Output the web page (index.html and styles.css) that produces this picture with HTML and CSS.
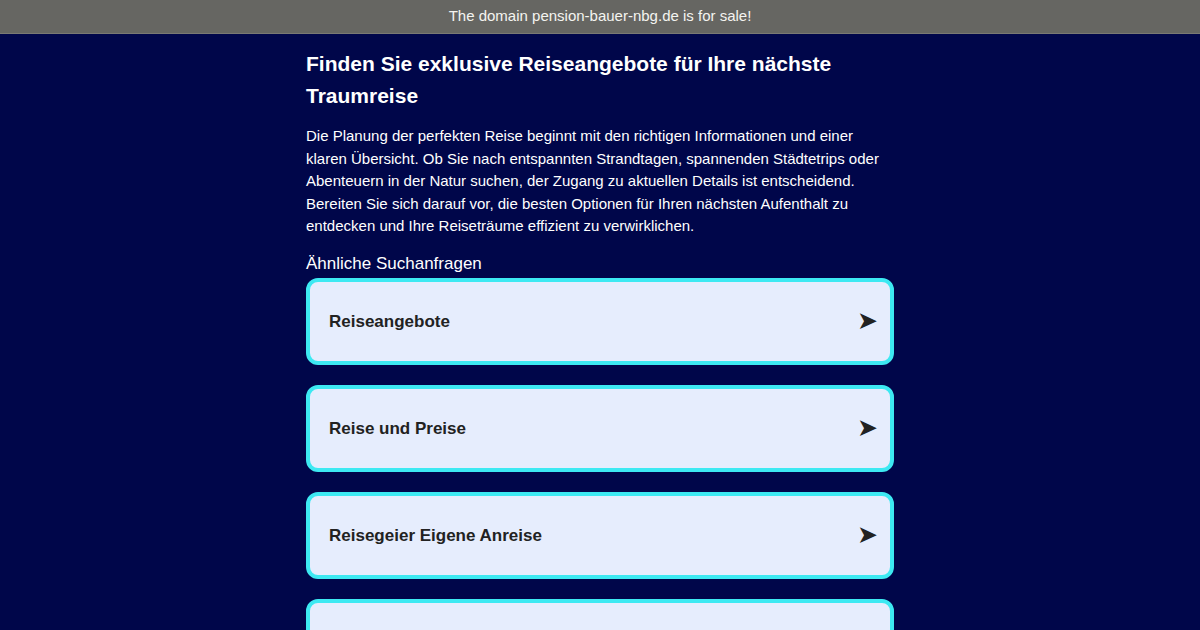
FILE: index.html
```html
<!DOCTYPE html>
<html lang="de">
<head>
<meta charset="utf-8">
<title>pension-bauer-nbg.de</title>
<link rel="stylesheet" href="styles.css">
</head>
<body>
<div class="topbar">The domain pension-bauer-nbg.de is for sale!</div>
<main class="content">
  <h1 class="title">Finden Sie exklusive Reiseangebote für Ihre nächste Traumreise</h1>
  <p class="intro">Die Planung der perfekten Reise beginnt mit den richtigen Informationen und einer klaren Übersicht. Ob Sie nach entspannten Strandtagen, spannenden Städtetrips oder Abenteuern in der Natur suchen, der Zugang zu aktuellen Details ist entscheidend. Bereiten Sie sich darauf vor, die besten Optionen für Ihren nächsten Aufenthalt zu entdecken und Ihre Reiseträume effizient zu verwirklichen.</p>
  <h2 class="related">Ähnliche Suchanfragen</h2>
  <ul class="cards">
    <li class="card"><span class="card-label">Reiseangebote</span><span class="arrow">➤</span></li>
    <li class="card"><span class="card-label">Reise und Preise</span><span class="arrow">➤</span></li>
    <li class="card"><span class="card-label">Reisegeier Eigene Anreise</span><span class="arrow">➤</span></li>
    <li class="card"><span class="card-label">Reisen</span><span class="arrow">➤</span></li>
  </ul>
</main>
</body>
</html>
```
FILE: styles.css
```css
html, body {
  margin: 0;
  padding: 0;
}
body {
  background: #00064a;
  font-family: "Liberation Sans", Arial, sans-serif;
  color: #ffffff;
}
.topbar {
  height: 33px;
  line-height: 32px;
  background: #666662;
  border-bottom: 1px solid #7a7a74;
  text-align: center;
  font-size: 15px;
  color: #f4f4f0;
}
.content {
  width: 588px;
  margin: 0 auto;
  padding-top: 14px;
}
.title {
  margin: 0;
  font-size: 21px;
  line-height: 32px;
  font-weight: bold;
}
.intro {
  margin: 13px 0 0;
  font-size: 15px;
  line-height: 22.6px;
}
.related {
  margin: 15px 0 3px;
  font-size: 17px;
  line-height: 22px;
  font-weight: normal;
}
.cards {
  list-style: none;
  margin: 0;
  padding: 0;
}
.card {
  box-sizing: border-box;
  height: 87px;
  margin-bottom: 20px;
  background: #e6edfd;
  border: 4px solid #3de9f2;
  border-radius: 12px;
  display: flex;
  align-items: center;
  justify-content: space-between;
  padding: 2px 12px 0 19px;
  color: #222222;
}
.card-label {
  font-size: 17px;
  font-weight: bold;
}
.arrow {
  font-family: "DejaVu Sans", sans-serif;
  font-size: 25px;
  line-height: 1;
  margin-bottom: 4px;
  color: #222222;
}
```
